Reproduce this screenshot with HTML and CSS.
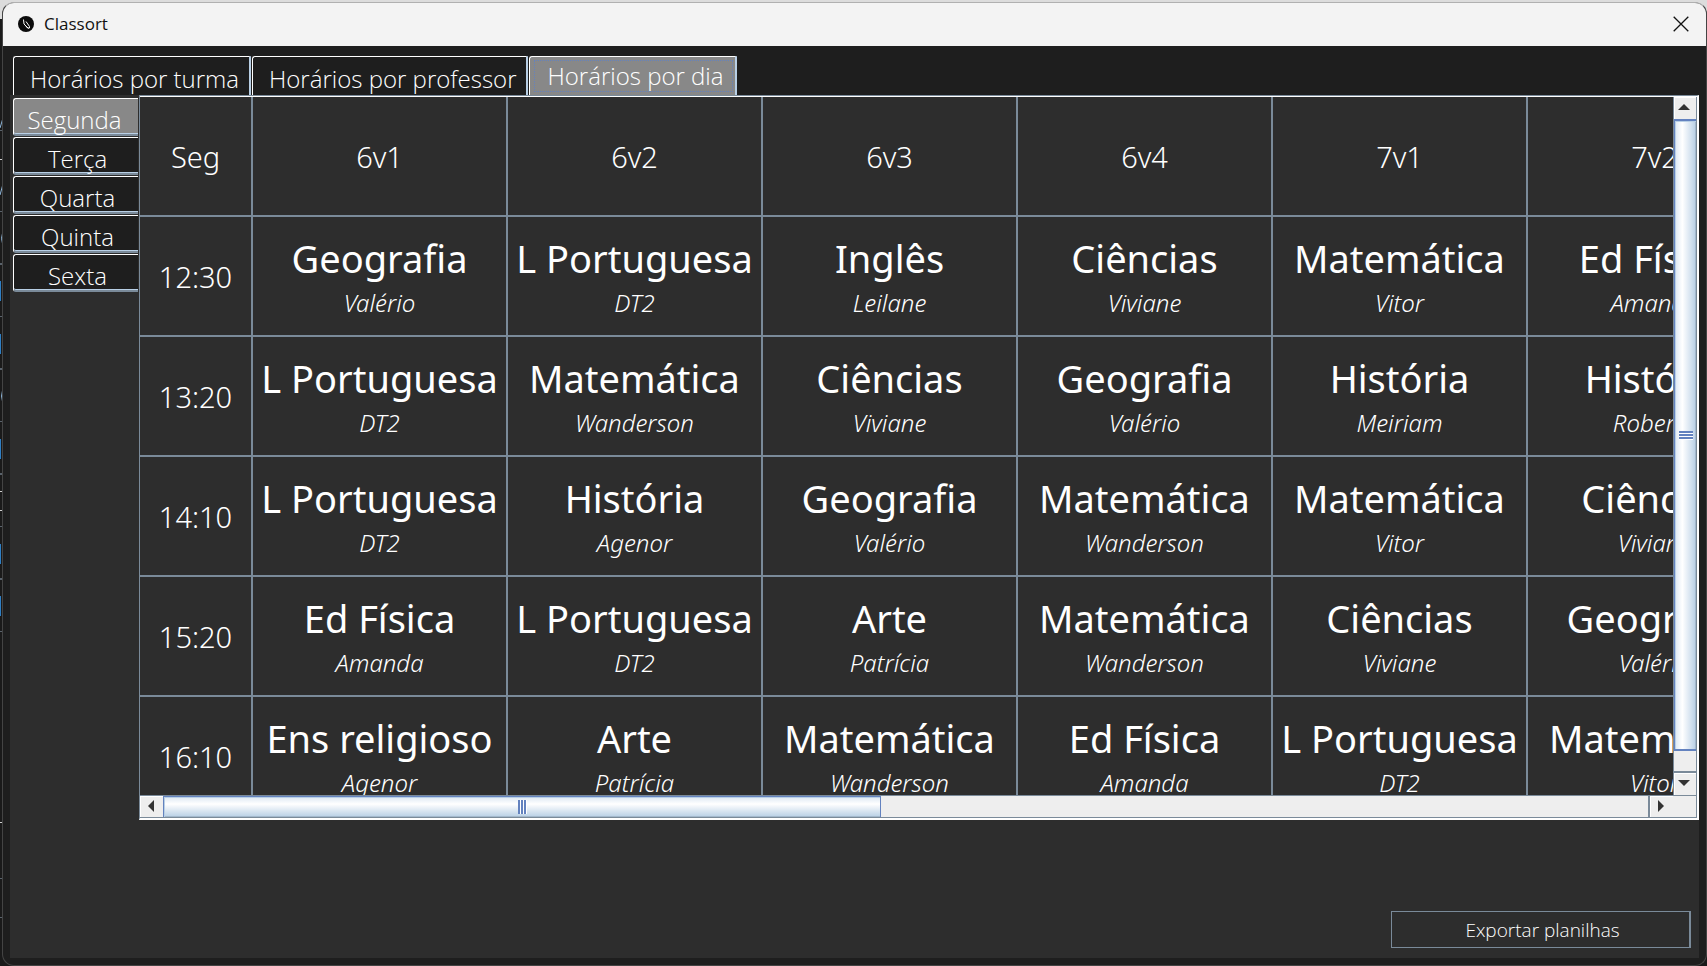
FILE: index.html
```html
<!DOCTYPE html>
<html lang="pt-BR">
<head>
<meta charset="utf-8">
<title>Classort</title>
<link rel="stylesheet" href="styles.css">
</head>
<body>
<svg class="backdrop" width="3" height="966" viewBox="0 0 3 966" aria-hidden="true">
  <path d="M0 0H3V19H0z" fill="#dcdcdc"/>
  <path d="M0 130.500H3M0 211.500H3M0 316.500H3M0 421.500H3M0 526.500H3M0 631.500H3M0 878.500H3M0 917.500H3" stroke="#5a636c"/>
  <path d="M0 264H3M0 369H3M0 474H3M0 579H3" stroke="#5a636c" stroke-width="2"/>
  <path d="M0 159.500H3M0 491.500H3M0 510.500H3M0 822.500H3" stroke="#d0d0d0"/>
  <path d="M0 128L3 118M0 195L3 184" stroke="#8fb8dc"/>
  <path d="M.5 281V301M.5 334V354M.5 439V459M.5 544V564M.5 596V616" stroke="#2f7fc4"/>
  <path d="M2.500 281V301M2.500 334V354M2.500 439V459M2.500 491V511M2.500 544V564M2.500 596V616" stroke="#c08a5a"/>
  <path d="M3 231Q0 238 3 246M3 388Q0 396 3 404" fill="none" stroke="#8fb8dc"/>
</svg>
<div class="window">
  <header class="titlebar">
    <svg class="logo" width="16" height="16" viewBox="0 0 16 16" aria-hidden="true">
      <circle cx="8" cy="8" r="8" fill="#0b0b0b"/>
      <path d="M5.500 3.500L6 8L10.500 12.500M8 5.500L11.500 10.500V12H9.500L7 9" fill="none" stroke="#fff"/>
    </svg>
    <h1 class="title">Classort</h1>
    <button class="close" type="button" aria-label="Fechar">
      <svg width="16" height="16" viewBox="0 0 16 16"><path d="M.7.700L15.300 15.300M15.300.700L.7 15.300" stroke="#111" stroke-width="1.300"/></svg>
    </button>
  </header>
  <nav class="tabs">
    <button class="tab" type="button">Horários por turma</button>
    <button class="tab" type="button">Horários por professor</button>
    <button class="tab selected" type="button"><span class="focus">Horários por dia</span></button>
  </nav>
  <main class="panel">
    <div class="content">
      <nav class="days">
        <button class="day selected" type="button">Segunda</button>
        <button class="day" type="button">Terça</button>
        <button class="day" type="button">Quarta</button>
        <button class="day" type="button">Quinta</button>
        <button class="day" type="button">Sexta</button>
      </nav>
      <div class="scrollpane">
        <div class="viewport">
          <table class="schedule">
            <thead>
              <tr><th class="hour">Seg</th><th>6v1</th><th>6v2</th><th>6v3</th><th>6v4</th><th>7v1</th><th>7v2</th></tr>
            </thead>
            <tbody>
              <tr><th class="hour">12:30</th>
                <td><b>Geografia</b><i>Valério</i></td><td><b>L Portuguesa</b><i>DT2</i></td><td><b>Inglês</b><i>Leilane</i></td><td><b>Ciências</b><i>Viviane</i></td><td><b>Matemática</b><i>Vitor</i></td><td><b>Ed Física</b><i>Amanda</i></td></tr>
              <tr><th class="hour">13:20</th>
                <td><b>L Portuguesa</b><i>DT2</i></td><td><b>Matemática</b><i>Wanderson</i></td><td><b>Ciências</b><i>Viviane</i></td><td><b>Geografia</b><i>Valério</i></td><td><b>História</b><i>Meiriam</i></td><td><b>História</b><i>Roberto</i></td></tr>
              <tr><th class="hour">14:10</th>
                <td><b>L Portuguesa</b><i>DT2</i></td><td><b>História</b><i>Agenor</i></td><td><b>Geografia</b><i>Valério</i></td><td><b>Matemática</b><i>Wanderson</i></td><td><b>Matemática</b><i>Vitor</i></td><td><b>Ciências</b><i>Viviane</i></td></tr>
              <tr><th class="hour">15:20</th>
                <td><b>Ed Física</b><i>Amanda</i></td><td><b>L Portuguesa</b><i>DT2</i></td><td><b>Arte</b><i>Patrícia</i></td><td><b>Matemática</b><i>Wanderson</i></td><td><b>Ciências</b><i>Viviane</i></td><td><b>Geografia</b><i>Valério</i></td></tr>
              <tr><th class="hour">16:10</th>
                <td><b>Ens religioso</b><i>Agenor</i></td><td><b>Arte</b><i>Patrícia</i></td><td><b>Matemática</b><i>Wanderson</i></td><td><b>Ed Física</b><i>Amanda</i></td><td><b>L Portuguesa</b><i>DT2</i></td><td><b>Matemática</b><i>Vitor</i></td></tr>
            </tbody>
          </table>
        </div>
        <div class="bar vertical">
          <button class="arrow" type="button" aria-label="Rolar para cima"><svg width="12" height="6" viewBox="0 0 12 6"><path d="M6 0L12 6H0z" fill="#333"/></svg></button>
          <div class="track"><div class="thumb"><span class="grip"></span></div></div>
          <button class="arrow" type="button" aria-label="Rolar para baixo"><svg width="12" height="6" viewBox="0 0 12 6"><path d="M0 0H12L6 6z" fill="#333"/></svg></button>
        </div>
        <div class="bar horizontal">
          <button class="arrow" type="button" aria-label="Rolar para a esquerda"><svg width="6" height="12" viewBox="0 0 6 12"><path d="M0 6L6 0V12z" fill="#333"/></svg></button>
          <div class="track"><div class="thumb"><span class="grip"></span></div></div>
          <button class="arrow" type="button" aria-label="Rolar para a direita"><svg width="6" height="12" viewBox="0 0 6 12"><path d="M0 0L6 6L0 12z" fill="#333"/></svg></button>
        </div>
        <div class="corner"></div>
      </div>
    </div>
    <footer class="actions"><button class="export" type="button">Exportar planilhas</button></footer>
  </main>
</div>
</body>
</html>
```
FILE: styles.css
```css
* { box-sizing: border-box; }
body {
  margin: 0;
  height: 100vh;
  padding: 2px 0 0 2px;
  overflow: hidden;
  background: linear-gradient(#dcdcdc 19px, #1a1a1a 19px);
  font-family: "Noto Sans", "Open Sans", sans-serif;
  font-weight: 300;
  color: #fff;
}
button { font: inherit; color: inherit; margin: 0; }
svg { display: block; }
.backdrop { position: absolute; left: 0; top: 0; }
.window {
  position: relative;
  height: 100%;
  display: flex;
  flex-direction: column;
  border: 1px solid #444;
  border-top-color: #b0b0b0;
  border-radius: 12px;
  overflow: hidden;
  background: #1e1e1e;
}
.titlebar {
  flex: none;
  height: 43px;
  display: flex;
  align-items: center;
  gap: 10px;
  padding: 0 17px 2px 15px;
  background: #f3f3f3;
  color: #111;
}
.title {
  flex: 1;
  margin: 0;
  font: 400 17px/24px "Open Sans", sans-serif;
}
.close { padding: 0; border: 0; background: none; }
.tabs {
  flex: none;
  display: flex;
  gap: 1px;
  padding: 10px 10px 0;
}
.tab {
  height: 39px;
  padding: 5px 10px 0 16px;
  border: 1px solid #fff;
  border-right: 2px solid #b8cfe5;
  border-bottom: 0;
  border-top-left-radius: 3px;
  background: #1e1e1e;
  font-family: "Open Sans", sans-serif;
  font-size: 24px;
  line-height: 30px;
}
.tab.selected {
  padding: 3px 2px 3px 4px;
  background: #888;
}
.focus {
  display: block;
  padding: 0 8px 0 12px;
  border: 1px dotted #6382bf;
}
.panel {
  flex: 1;
  min-height: 0;
  margin: 0 7px;
  margin-bottom: 7px;
  display: flex;
  flex-direction: column;
  background: #2d2d2d;
}
.content {
  flex: 1;
  min-height: 0;
  display: flex;
}
.days {
  flex: none;
  width: 129px;
  display: flex;
  flex-direction: column;
  gap: 1px;
  padding: 3px 1px 0 3px;
}
.day {
  height: 38px;
  padding: 6px 0 0 3px;
  border: 1px solid #fff;
  border-right: 0;
  border-bottom: 2px solid #7a8a99;
  border-radius: 3px 0 0 3px;
  background: #1e1e1e;
  box-shadow: inset 0 -1px #b8cfe5;
  font-family: "Open Sans", sans-serif;
  font-size: 24px;
  line-height: 30px;
}
.day.selected { background: #888; padding: 6px 3px 0 0; }
.scrollpane {
  flex: 1;
  min-width: 0;
  display: grid;
  grid-template: minmax(0, 1fr) 23px / minmax(0, 1fr) 24px;
  border: 1px solid #7a8a99;
  border-right: 2px solid #fff;
  border-bottom: 2px solid #fff;
  box-shadow: inset 0 1px #fff;
  padding-top: 1px;
}
.viewport { overflow: hidden; }
.schedule {
  table-layout: fixed;
  width: 1643px;
  border-collapse: separate;
  border-spacing: 0;
}
.schedule th, .schedule td {
  width: 255px;
  height: 120px;
  padding: 4px 0 0;
  border-right: 2px solid #7a8a99;
  border-bottom: 2px solid #7a8a99;
  text-align: center;
  vertical-align: middle;
}
.schedule th {
  padding-top: 2px;
  font-size: 29px;
  line-height: 40px;
  font-weight: 300;
}
.schedule .hour { width: 113px; }
.schedule b {
  display: block;
  font-size: 38px;
  line-height: 50px;
  font-weight: 400;
  white-space: nowrap;
}
.schedule i {
  display: block;
  font-size: 24px;
  line-height: 40px;
}
.bar { display: flex; background: #eee; }
.bar.vertical {
  flex-direction: column;
  border-left: 1px solid #7a8a99;
  border-right: 1px solid #7a8a99;
}
.bar.horizontal {
  border-top: 1px solid #7a8a99;
  border-bottom: 1px solid #7a8a99;
}
.arrow {
  flex: none;
  width: 22px;
  height: 22px;
  display: grid;
  place-items: center;
  padding: 0 2px 2px 0;
  border: 0;
  background: #eee;
  box-shadow: inset 1px 1px #fff;
}
.horizontal .arrow { width: 23px; height: auto; }
.track { flex: 1; }
.vertical .track { border-bottom: 2px solid #7a8a99; }
.horizontal .track { border-right: 2px solid #7a8a99; }
.thumb { display: grid; place-items: center; }
.vertical .thumb {
  height: 97%;
  border: solid #6382bf;
  border-width: 2px 0 2px 1px;
  box-shadow: inset 1px 1px #b8cfe5, inset -1px 0 #a3b8cc;
  background: linear-gradient(90deg, #dde8f3, #fff 35%, #b8cfe5);
}
.horizontal .thumb {
  width: 718px;
  max-width: 53%;
  height: 100%;
  border: solid #6382bf;
  border-width: 1px 1px 0;
  box-shadow: inset 1px 1px #b8cfe5, inset 0 -1px #a3b8cc;
  background: linear-gradient(#dde8f3, #fff 35%, #b8cfe5);
}
.vertical .grip {
  width: 14px;
  height: 9px;
  background: repeating-linear-gradient(#6382bf 0 2px, #fff 2px 3px);
}
.horizontal .grip {
  width: 9px;
  height: 14px;
  background: repeating-linear-gradient(90deg, #6382bf 0 2px, #fff 2px 3px);
}
.corner {
  background: #eee;
  border: solid #7a8a99;
  border-width: 1px 1px 1px 0;
}
.actions {
  flex: none;
  display: flex;
  justify-content: flex-end;
  padding: 91px 8px 10px;
}
.export {
  width: 300px;
  height: 37px;
  padding: 0 0 0 4px;
  border: 1px solid #7a8a99;
  border-right-width: 2px;
  background: #2d2d2d;
  font-family: "Open Sans", sans-serif;
  font-size: 19px;
  line-height: 26px;
}
```
